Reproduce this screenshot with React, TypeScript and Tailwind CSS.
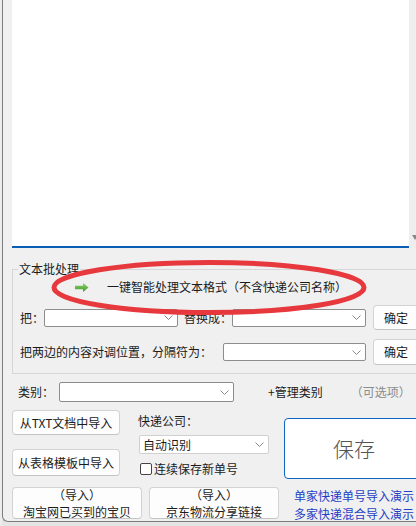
import React from 'react';

function Chevron() {
  return (
    <svg width="9" height="5" viewBox="0 0 9 5" className="shrink-0">
      <polyline points="0.5,0.5 4.5,4.5 8.5,0.5" fill="none" stroke="#8a8a8a" strokeWidth="1" />
    </svg>
  );
}

function Combo({ w, h = 18, text, border = 'border-[#8d8d8d]' }: { w: string; h?: number; text?: string; border?: string }) {
  return (
    <div
      className={`flex items-center justify-between rounded-[2px] border bg-white pl-[3px] pr-[4px] ${w} ${border}`}
      style={{ height: h }}
    >
      <span className="leading-none">{text ?? ''}</span>
      <Chevron />
    </div>
  );
}

function Btn({ className, children }: { className: string; children: React.ReactNode }) {
  return (
    <div
      className={`flex shrink-0 flex-col items-center justify-center rounded-[4px] border border-[#d3d3d3] border-b-[#c4c4c4] bg-[#fdfdfd] text-center ${className}`}
    >
      {children}
    </div>
  );
}

export default function App() {
  return (
    <div className="relative flex h-[526px] w-[416px] overflow-hidden bg-[#e4e4e4] font-['Noto_Sans_CJK_SC','Noto_Sans',sans-serif] text-[12px] text-[#1b1b1b]">
      {/* window behind */}
      <div className="h-full w-[2px] bg-[#ececec]" />

      <div className="flex h-[522px] w-[414px] shrink-0 flex-col rounded-bl-[6px] border-b border-l border-[#7c7c7c] bg-[#f0f0f0] pl-[9px]">
        {/* text area */}
        <div className="flex h-[248px] shrink-0">
          <div className="flex-1 border-b-2 border-[#0b5fb3] bg-white" />
          <div className="relative w-[7px] bg-[#eeeeee]">
            <svg width="6" height="5" viewBox="0 0 6 5" className="absolute left-[3px] top-[235px]">
              <polygon points="0,0 6,0 3,5" fill="#8a8a8a" />
            </svg>
          </div>
        </div>

        {/* 文本批处理 */}
        <fieldset className="mr-[-14px] mt-[14px] shrink-0 border border-[#d6d6d6] pb-[8px] pl-[7px]">
          <legend className="-ml-[2px] px-px leading-[14px]">文本批处理</legend>

          <div className="mt-px flex h-[20px] items-center">
            <svg width="14" height="9" viewBox="0 0 14 9" className="ml-[55px]">
              <defs>
                <linearGradient id="ga" x1="0" y1="0" x2="0" y2="1">
                  <stop offset="0" stopColor="#8fd16a" />
                  <stop offset="1" stopColor="#3f9a2c" />
                </linearGradient>
              </defs>
              <path d="M0 2.8 H8 V0 L13.5 4.5 L8 9 V6.2 H0 Z" fill="url(#ga)" />
            </svg>
            <span className="ml-[18px]">一键智能处理文本格式（不含快递公司名称）</span>
          </div>

          <div className="mt-[8px] flex h-[25px] items-center">
            <span className="w-[24px]">把：</span>
            <Combo w="w-[134px]" />
            <span className="ml-[6px] w-[48px]">替换成：</span>
            <Combo w="w-[134px]" />
            <Btn className="ml-[7px] h-[25px] w-[46px]">确定</Btn>
          </div>

          <div className="mt-[9px] flex h-[26px] items-center">
            <span className="w-[203px] whitespace-nowrap">把两边的内容对调位置，分隔符为：</span>
            <Combo w="w-[143px]" />
            <Btn className="ml-[7px] h-[26px] w-[46px]">确定</Btn>
          </div>
        </fieldset>

        {/* 类别 */}
        <div className="mt-[7px] flex h-[22px] shrink-0 items-center">
          <span className="ml-[6px] w-[36px]">类别：</span>
          <div className="ml-[5px]">
            <Combo w="w-[175px]" h={20} />
          </div>
          <span className="ml-[34px]">+管理类别</span>
          <span className="ml-[28px] whitespace-nowrap text-[#8c8c8c]">（可选项）</span>
        </div>

        {/* import / save */}
        <div className="flex h-[80px] shrink-0">
          <div className="flex w-[108px] flex-col">
            <Btn className="mt-[7px] h-[25px] w-[108px]">从TXT文档中导入</Btn>
            <Btn className="mt-[14px] h-[27px] w-[108px]">从表格模板中导入</Btn>
          </div>
          <div className="ml-[18px] flex w-[131px] flex-col">
            <span className="mt-[11px] h-[14px] leading-[14px]">快递公司：</span>
            <div className="ml-px mt-[7px]">
              <Combo w="w-[130px]" h={19} text="自动识别" border="border-[#d0d0d0]" />
            </div>
            <div className="ml-[2px] mt-[8px] flex h-[13px] items-center">
              <div className="h-[12px] w-[12px] rounded-[2px] border border-[#444] bg-white" />
              <span className="ml-[2px] leading-none">连续保存新单号</span>
            </div>
          </div>
          <div className="ml-[15px] mt-[15px] flex h-[61px] w-[140px] shrink-0 items-center justify-center rounded-[4px] border border-[#0f67bf] bg-white">
            <span className="text-[21px] font-light text-[#555]">保存</span>
          </div>
        </div>

        <div className="mt-[4px] flex h-[32px] shrink-0">
          <Btn className="h-[32px] w-[130px] leading-[17px]">
            <span>（导入）</span>
            <span>淘宝网已买到的宝贝</span>
          </Btn>
          <Btn className="ml-[7px] h-[32px] w-[130px] leading-[17px]">
            <span>（导入）</span>
            <span>京东物流分享链接</span>
          </Btn>
          <div className="ml-[15px] flex flex-col whitespace-nowrap leading-[18px] text-[#1f3fc6]">
            <span>单家快递单号导入演示</span>
            <span>多家快递混合导入演示</span>
          </div>
        </div>
      </div>

      {/* hand-drawn red mark */}
      <svg width="320" height="58" viewBox="0 0 320 58" className="pointer-events-none absolute left-[50px] top-[259px]">
        <ellipse cx="159" cy="28.5" rx="155" ry="25" fill="none" stroke="#e6383d" strokeWidth="5" />
      </svg>
    </div>
  );
}
